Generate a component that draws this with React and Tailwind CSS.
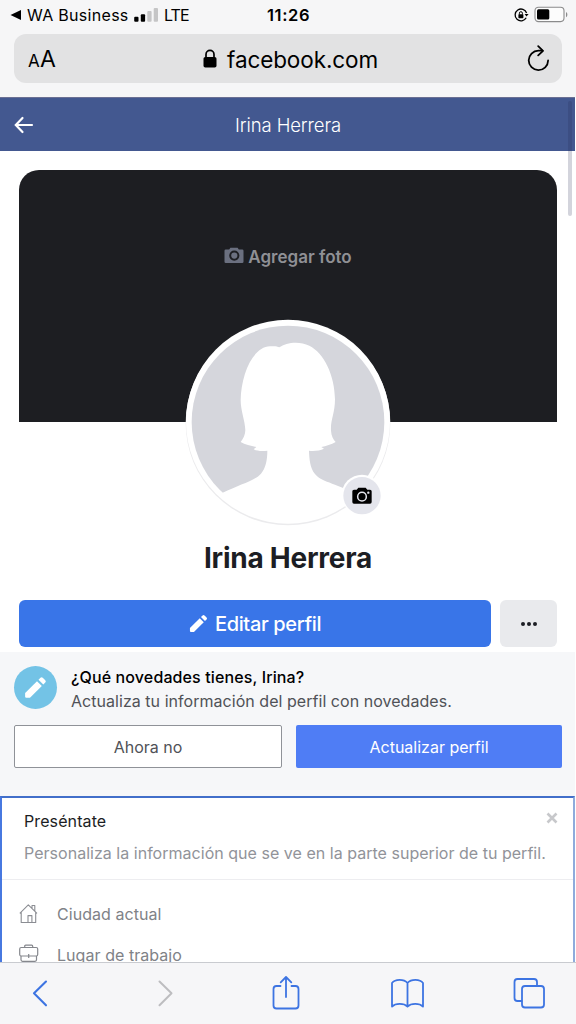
import React from "react";

function StatusBar() {
  return (
    <div className="flex h-[34px] shrink-0 items-start pt-[4px] text-black">
      <div className="flex h-[22px] w-[267px] items-center">
        <svg className="ml-[10px] h-[12px] w-[12px]" viewBox="0 0 12 12"><path d="M.5 6 11 1v10Z" /></svg>
        <span className="ml-[5px] w-[106px] text-[16px] tracking-[0.3px]">WA Business</span>
        <svg className="h-[16px] w-[25px]" viewBox="0 0 25 16">
          <rect x="1.2" y="9.8" width="4.3" height="5" rx="1" />
          <rect x="7.8" y="7.2" width="4.3" height="7.6" rx="1" />
          <rect x="14.3" y="4" width="4.3" height="10.8" rx="1" fill="#c5c5c6" />
          <rect x="20.7" y="1" width="4.3" height="13.8" rx="1" fill="#c5c5c6" />
        </svg>
        <span className="ml-[6px] text-[16px] tracking-[-0.9px]">LTE</span>
      </div>
      <span className="h-[22px] text-[16.5px] leading-[22px] font-semibold tracking-[0.6px]">11:26</span>
      <div className="ml-auto flex h-[22px] items-center pr-[7px]">
        <svg className="h-[16px] w-[16px]" viewBox="0 0 16 16" fill="none" stroke="#000" strokeWidth="1.3">
          <path d="M13.2 10.8A5.9 5.9 0 1 1 13.6 6" />
          <path d="m11.6 7 1.9 2.6L15.6 7Z" fill="#000" stroke="none" />
          <rect x="5.4" y="7.2" width="5" height="4" rx=".6" fill="#000" stroke="none" />
          <path d="M6.4 7.5V6.2a1.5 1.5 0 0 1 3 0v1.3" strokeWidth="1" />
        </svg>
        <svg className="mb-[2px] ml-[5px] h-[17px] w-[35px]" viewBox="0 0 35 17">
          <rect x="1" y="1.2" width="29" height="14.4" rx="3.5" fill="#fcfcfc" stroke="#8b8b8c" strokeWidth="1.1" />
          <rect x="3" y="3.2" width="12.3" height="10.4" rx="1.5" />
          <path d="M32 6v5.2c1.8-.8 1.8-4.4 0-5.2Z" fill="#8b8b8c" />
        </svg>
      </div>
    </div>
  );
}

function AddressBar() {
  return (
    <div className="mx-[14px] flex h-[49px] shrink-0 items-center rounded-[12px] bg-[#e2e2e3] text-black">
      <div className="flex w-[189px] items-baseline pl-[14px] pt-[1px]">
        <span className="w-[12px] text-[17px]">A</span>
        <span className="text-[23px]">A</span>
      </div>
      <svg className="h-[20px] w-[14px]" viewBox="0 0 14 20">
        <rect x=".5" y="8" width="13" height="10.6" rx="1.8" />
        <path d="M3 9V5.4a4 4 0 0 1 8 0V9" fill="none" stroke="#000" strokeWidth="1.7" />
      </svg>
      <span className="ml-[10px] pt-[2px] text-[22.5px] tracking-[-0.1px]">facebook.com</span>
      <svg className="ml-auto mr-[11px] h-[28px] w-[26px]" viewBox="0 0 26 28" fill="none" stroke="#000" strokeWidth="1.8" strokeLinecap="round" strokeLinejoin="round">
        <path d="M23.1 15.5a9.7 9.7 0 1 1-9.7-9.8h4" />
        <path d="m13.2 1.2 4.8 4.6-4.8 4.6" />
      </svg>
    </div>
  );
}

function Avatar() {
  return (
    <svg className="absolute left-[180px] top-[159px] h-[220px] w-[216px]" viewBox="0 0 648 660">
      <defs>
        <clipPath id="face"><circle cx="324" cy="336" r="299" /></clipPath>
      </defs>
      <circle cx="324" cy="339" r="307" fill="#ebebed" />
      <circle cx="324" cy="335" r="306" fill="#fff" />
      <circle cx="324" cy="336" r="289" fill="#d5d6dc" />
      <path
        clipPath="url(#face)"
        fill="#fff"
        d="M298 112C318 97 358 92 388 107C432 129 464 195 465 268C465 310 451 330 453 362C454 378 460 388 467 396C454 404 438 408 424 411L432 416C420 422 401 424 387 422C388 447 390 474 405 492C422 514 462 519 530 552L550 660H90L128 548C178 524 226 511 243 491C257 475 262 450 262 422C246 424 230 423 221 418L229 411C213 408 195 404 182 396C190 386 196 374 196 360C195 332 182 302 182 270C183 196 218 110 270 109C282 108 291 108 298 112Z"
      />
      <path fill="#fff" d="M128 548 324 590 530 548Q460 624 324 626 190 624 128 548Z" />
      <circle cx="546" cy="555" r="61" fill="#fff" />
      <circle cx="546" cy="557" r="56" fill="#e4e5ec" />
      <path d="M522 539h8l5-6h22l5 6h8q5 0 5 5v32q0 5-5 5h-48q-5 0-5-5v-32q0-5 5-5Z" />
      <circle cx="546" cy="560" r="13" fill="none" stroke="#e4e5ec" strokeWidth="4.5" />
      <circle cx="565" cy="548" r="3.5" fill="#e4e5ec" />
    </svg>
  );
}

function Pencil({ className }) {
  return (
    <svg className={className} viewBox="0 0 20 20" fill="currentColor">
      <path d="M1 14.800 11.300 4.500l4.200 4.200L5.200 19H2q-1 0-1-1Z" />
      <path d="m12.600 3.200 1.700-1.700q1-1 2 0l2.200 2.200q1 1 0 2L16.800 7.400Z" />
    </svg>
  );
}

function Profile() {
  return (
    <section className="relative flex h-[501px] shrink-0 flex-col px-[19px] pt-[19px]">
      <div className="flex h-[252px] w-[538px] shrink-0 justify-center rounded-t-[20px] bg-[#1d1e22]">
        <div className="box-content flex h-[24px] items-center pt-[76px]">
          <svg className="mb-[6px] h-[17px] w-[20px]" viewBox="0 0 20 17">
            <path fill="#6b7080" d="M1.8 2.5h3.4L6.4.7h7.2l1.2 1.8h3.4q1.3 0 1.3 1.3v11q0 1.3-1.3 1.3H1.8Q.5 16.1.5 14.8v-11q0-1.3 1.3-1.3Z" />
            <circle cx="10.3" cy="8.6" r="4.1" fill="none" stroke="#1d1e22" strokeWidth="2" />
          </svg>
          <span className="ml-[4px] text-[17px] font-semibold text-[#8f9095]">Agregar foto</span>
        </div>
      </div>
      <Avatar />
      <h1 className="mt-[118px] w-[538px] text-center text-[28px] leading-[36px] font-bold tracking-[-0.25px] text-[#1c1e24]">Irina Herrera</h1>
      <div className="mt-[24px] flex h-[47px] gap-[9px]">
        <button className="flex w-[472px] shrink-0 items-center justify-center rounded-[6px] bg-[#3975e8] text-white">
          <Pencil className="h-[19px] w-[19px]" />
          <span className="ml-[7px] text-[20px] font-medium tracking-[-0.35px]">Editar perfil</span>
        </button>
        <button className="flex w-[57px] shrink-0 items-center justify-center gap-[2px] rounded-[6px] bg-[#e9eaed]">
          <span className="size-[4px] rounded-full bg-[#1c1e24]" />
          <span className="size-[4px] rounded-full bg-[#1c1e24]" />
          <span className="size-[4px] rounded-full bg-[#1c1e24]" />
        </button>
      </div>
    </section>
  );
}

function Prompt() {
  return (
    <section className="flex h-[144px] shrink-0 flex-col bg-[#f6f7f9] px-[14px] pt-[14px]">
      <div className="flex h-[43px]">
        <div className="flex size-[43px] items-center justify-center rounded-full bg-[#73c3e6] text-white">
          <Pencil className="h-[23px] w-[23px]" />
        </div>
        <div className="-mt-px ml-[14px] whitespace-nowrap text-[16px] leading-[24px]">
          <p className="font-medium tracking-[0.12px] text-black">¿Qué novedades tienes, Irina?</p>
          <p className="tracking-[0.04px] text-[#505257]">Actualiza tu información del perfil con novedades.</p>
        </div>
      </div>
      <div className="mt-[16px] flex h-[43px] gap-[14px] text-[16px]">
        <button className="w-[268px] shrink-0 rounded-[2px] border border-[#8f9298] bg-white text-[#505257]">Ahora no</button>
        <button className="w-[266px] shrink-0 rounded-[2px] bg-[#4f7df5] text-white">Actualizar perfil</button>
      </div>
    </section>
  );
}

function IntroCard() {
  return (
    <section className="flex h-[166px] shrink-0 flex-col overflow-hidden border-x-[2px] border-t-[2px] border-t-[#426fca] border-l-[#4778e0] border-r-[#8fabdc] bg-white text-[16px]">
      <div className="flex h-[82px] shrink-0 flex-col border-b border-[#ededf0] pl-[22px] whitespace-nowrap">
        <div className="mt-[11px] flex h-[24px] leading-[24px]">
          <h2 className="tracking-[0.1px] text-[#1c1e24]">Preséntate</h2>
          <svg className="ml-auto mr-[14px] mt-[2px] h-[14px] w-[14px]" viewBox="0 0 14 14" stroke="#c7c8cb" strokeWidth="2.6"><path d="m2.5 2.5 9 9m0-9-9 9" /></svg>
        </div>
        <p className="mt-[8px] leading-[24px] tracking-[0.025px] text-[#919399]">Personaliza la información que se ve en la parte superior de tu perfil.</p>
      </div>
      <div className="mt-[22px] flex h-[24px] shrink-0 items-center pl-[17px] text-[#808287]">
        <svg className="h-[20px] w-[20px]" viewBox="0 0 20 20" fill="none" stroke="#8b8d93" strokeWidth="1.1" strokeLinejoin="round">
          <path d="M2.200 8v10.500h14.500V8M.8 9.300 9.300.9l8.700 8.400M13 4.500V1.500h2.800v5.500M9 18.300v-6.700h3.900v6.700" />
        </svg>
        <span className="ml-[18px] tracking-[0.05px]">Ciudad actual</span>
      </div>
      <div className="mt-[17px] flex h-[24px] shrink-0 items-center pl-[17px] text-[#808287]">
        <svg className="mb-[2px] h-[20px] w-[20px]" viewBox="0 0 20 20" fill="none" stroke="#85878d" strokeWidth="1.2" strokeLinejoin="round">
          <rect x=".7" y="3.5" width="18" height="8.5" rx="1.5" />
          <path d="M5.7 3.5V2.2q0-1 1-1h6q1 0 1 1v1.3M2 12v3.8q0 1.500 1.500 1.500h12.500q1.500 0 1.500-1.500V12M9.700 10v4" />
        </svg>
        <span className="ml-[18px] tracking-[0.05px]">Lugar de trabajo</span>
      </div>
    </section>
  );
}

function Toolbar() {
  return (
    <nav className="h-[62px] w-[576px] shrink-0 border-t border-[#c9cbd0] bg-[#f6f6f8]">
      <svg className="h-[61px] w-[576px]" viewBox="0 963 576 61" fill="none" stroke="#3d74e2" strokeWidth="1.8" strokeLinecap="round" strokeLinejoin="round">
        <path d="M46 981.5 34 993.3l12 12" strokeWidth="2.1" />
        <path d="M159.5 981.5l12 11.8-12 12" stroke="#bdbdc0" strokeWidth="2" />
        <path d="M280.5 986h-4q-3 0-3 3v16.500q0 3 3 3h19q3 0 3-3V989q0-3-3-3h-4M286 997v-20m-5.300 5.300 5.300-5.300 5.300 5.300" />
        <path d="M407.500 983c-3.500-4.200-12.500-4.200-15.500 0v23.500c3.500-3.500 12-3.500 15.500 0 3.500-3.500 12-3.500 15.500 0V983c-3-4.200-12-4.200-15.500 0v23" />
        <path d="M521.500 1001h-4q-3 0-3-3v-16q0-3 3-3h16.500q3 0 3 3v3.500" />
        <rect x="522" y="986" width="22" height="21.500" rx="3" />
      </svg>
    </nav>
  );
}

export default function App() {
  return (
    <main className="relative flex h-[1024px] w-[576px] flex-col overflow-hidden bg-white font-['Inter','Liberation_Sans',sans-serif]">
      <div className="flex h-[97px] shrink-0 flex-col bg-[#f6f6f7]">
        <StatusBar />
        <AddressBar />
      </div>
      <div className="flex w-[575px] flex-col">
        <header className="flex h-[54px] shrink-0 items-center border-t border-[#6b7093] bg-[#435890] text-white">
          <svg className="ml-[14px] h-[18px] w-[20px]" viewBox="0 0 20 18" fill="none" stroke="#fff" strokeWidth="2.2" strokeLinecap="round"><path d="M18 9H2M8.500 2 1.800 9l6.700 7" /></svg>
          <span className="ml-[201px] pt-[3px] text-[18.5px] font-light tracking-[-0.1px]">Irina Herrera</span>
        </header>
        <Profile />
        <Prompt />
        <IntroCard />
      </div>
      <Toolbar />
      <div className="absolute left-[568px] top-[101px] h-[115px] w-[4px] rounded-full bg-[#252850]/20" />
    </main>
  );
}
